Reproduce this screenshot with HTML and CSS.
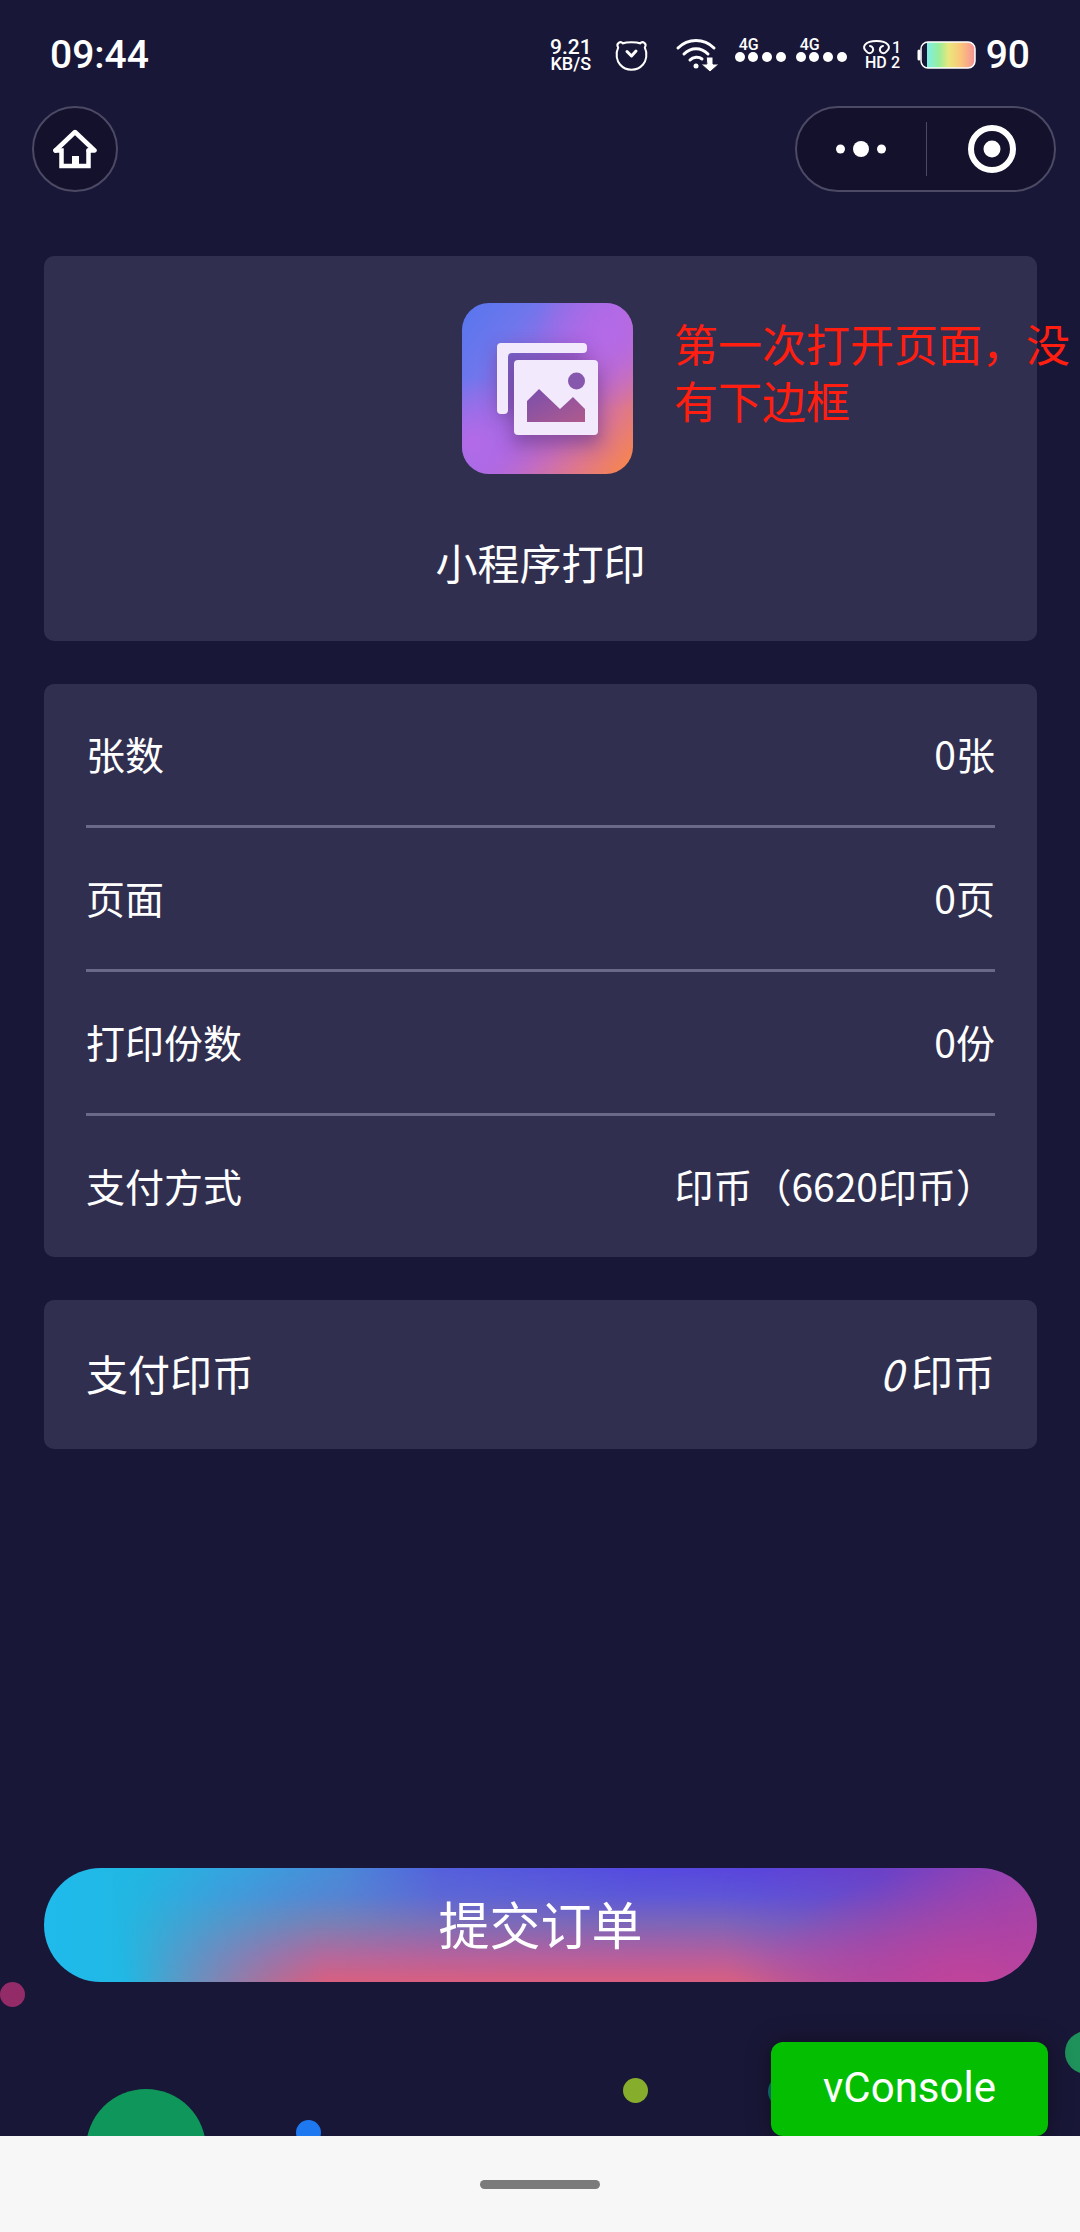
FILE: index.html
```html
<!DOCTYPE html>
<html lang="zh-CN">
<head>
<meta charset="utf-8">
<meta name="viewport" content="width=device-width, initial-scale=1">
<title>小程序打印</title>
<link rel="stylesheet" href="styles.css">
</head>
<body>
<div class="screen">
  <div class="bubbles" aria-hidden="true">
    <span class="bubble bubble-pink"></span>
    <span class="bubble bubble-green"></span>
    <span class="bubble bubble-blue"></span>
    <span class="bubble bubble-lime"></span>
    <span class="bubble bubble-teal"></span>
    <span class="bubble bubble-edge"></span>
  </div>

  <header class="status">
    <time class="clock">09:44</time>
    <div class="indicators">
      <div class="speed"><span class="speed-value">9.21</span><span class="speed-unit">KB/S</span></div>
      <svg class="alarm" viewBox="0 0 59 32" fill="none" stroke="#fff" stroke-width="2" stroke-linecap="round" stroke-linejoin="round">
        <path d="M21 4.5C24 2.800 35 2.800 38 4.500C40.500 1.500 45.500 4.500 42.800 8.500C46 15 44 22 41 25.500C35 32.500 24 32.500 18 25.500C15 22 13 15 16.200 8.500C13.500 4.500 18.500 1.500 21 4.500Z"/>
        <path d="M25 12.500l4.500 4.500 4.500-5" stroke-width="3"/>
      </svg>
      <svg class="wifi" viewBox="0 0 54 36" fill="none" stroke="#fff" stroke-width="3" stroke-linecap="round">
        <path d="M7 11C17 1 33 1 43 11"/><path d="M13 17C20 10 30 10 37 17"/><path d="M19 23C22 19.500 28 19.500 31 22"/>
        <circle cx="25" cy="29" r="2.500" fill="#fff" stroke="none"/>
        <path d="M35.500 20h6.500v7h6L39 35l-9-8h5.500z" fill="#fff" stroke="#191737" stroke-width="1"/>
      </svg>
      <div class="signal"><span class="signal-type">4G</span><span class="signal-dots"><i></i><i></i><i></i><i></i></span></div>
      <div class="signal"><span class="signal-type">4G</span><span class="signal-dots"><i></i><i></i><i></i><i></i></span></div>
      <svg class="hd" viewBox="0 0 50 40">
        <path d="M13 11A3.600 3.600 0 1 1 9.500 16.500C4 12 8 6 19.500 6S35 12 29.500 16.500A3.600 3.600 0 1 1 26 11" fill="none" stroke="#fff" stroke-width="2" stroke-linecap="round"/>
        <text x="8" y="33" font-size="16">HD</text>
        <text x="35" y="18" font-size="16">1</text>
        <text x="34" y="33" font-size="16">2</text>
      </svg>
      <svg class="battery" viewBox="0 0 59 28">
        <defs><linearGradient id="charge"><stop offset="0" stop-color="#7defe6"/><stop offset=".25" stop-color="#98ee9a"/><stop offset=".45" stop-color="#eae77c"/><stop offset=".7" stop-color="#fbc57b"/><stop offset="1" stop-color="#f79096"/></linearGradient></defs>
        <path d="M2 10v8" stroke="#fff" stroke-width="3" stroke-linecap="round"/>
        <path d="M10 1h41q7 0 7 7v12q0 7-7 7H10z" fill="url(#charge)"/>
        <rect x="4" y="1" width="54" height="26" rx="7" fill="none" stroke="#fff" stroke-width="1.500"/>
      </svg>
      <span class="level">90</span>
    </div>
  </header>

  <nav class="navbar">
    <button class="home" type="button" aria-label="首页">
      <svg viewBox="0 0 44 40" fill="none" stroke="#fff" stroke-linejoin="round" stroke-linecap="round"><path d="M2.500 21.500L22 3l19.500 18.500h-6" stroke-width="4.500"/><path d="M2.500 21.500H8.500V37h27V21.500" stroke-width="4.500" stroke-linejoin="miter"/><path d="M19 27h7v10h-7z" fill="#fff" stroke="none"/></svg>
    </button>
    <div class="capsule">
      <button class="capsule-button" type="button" aria-label="更多"><svg class="more" viewBox="0 0 50 16" fill="#fff"><circle cx="4.500" cy="8" r="4.500"/><circle cx="25" cy="8" r="8"/><circle cx="45.500" cy="8" r="4.500"/></svg></button>
      <button class="capsule-button capsule-close" type="button" aria-label="关闭"><svg class="target" viewBox="0 0 48 48"><circle cx="24" cy="24" r="21" fill="none" stroke="#fff" stroke-width="6"/><circle cx="24" cy="24" r="8.500" fill="#fff"/></svg></button>
    </div>
  </nav>

  <main class="content">
    <section class="card app">
      <svg class="app-icon" viewBox="0 0 171 171">
        <defs>
          <linearGradient id="tile" x1="0" y1=".1" x2="1" y2=".9"><stop offset="0" stop-color="#5b76ee"/><stop offset=".2" stop-color="#6f76ec"/><stop offset=".5" stop-color="#a868e2"/><stop offset=".68" stop-color="#c46cc0"/><stop offset=".82" stop-color="#dc7690"/><stop offset="1" stop-color="#f58452"/></linearGradient>
          <radialGradient id="tint"><stop offset="0" stop-color="#b46ae8"/><stop offset="1" stop-color="#b46ae8" stop-opacity="0"/></radialGradient>
          <linearGradient id="hill" x1="0" y1="0" x2="1" y2="1"><stop offset="0" stop-color="#7a4fae"/><stop offset="1" stop-color="#b05a8c"/></linearGradient>
          <filter id="soft" x="-30%" y="-30%" width="160%" height="160%"><feGaussianBlur stdDeviation="9"/></filter>
          <clipPath id="tile-shape"><rect width="171" height="171" rx="27"/></clipPath>
        </defs>
        <g clip-path="url(#tile-shape)">
          <rect width="171" height="171" fill="url(#tile)"/>
          <circle cx="150" cy="30" r="76" fill="url(#tint)"/>
          <circle cx="10" cy="140" r="66" fill="url(#tint)"/>
          <g fill="#6c3c8c" opacity=".65" filter="url(#soft)"><rect x="50" y="64" width="88" height="78"/><rect x="36" y="46" width="88" height="14"/><rect x="36" y="46" width="14" height="68"/></g>
        </g>
        <path d="M39 40h82q4 0 4 4v2q0 4-4 4H50q-4 0-4 4v53q0 4-4 4h-3q-4 0-4-4V44q0-4 4-4z" fill="#f2eafc"/>
        <rect x="52" y="57" width="84" height="75" rx="4" fill="#f2eafc"/>
        <circle cx="114.500" cy="78" r="8.500" fill="#8757ae"/>
        <path d="M65 119V98l12-12 21 20 13-12 12 12v13z" fill="url(#hill)"/>
      </svg>
      <h1 class="app-name">小程序打印</h1>
      <p class="note">第一次打开页面，没<br>有下边框</p>
    </section>

    <dl class="card details">
      <div class="row"><dt>张数</dt><dd>0张</dd></div>
      <div class="row"><dt>页面</dt><dd>0页</dd></div>
      <div class="row"><dt>打印份数</dt><dd>0份</dd></div>
      <div class="row"><dt>支付方式</dt><dd>印币（6620印币）</dd></div>
    </dl>

    <dl class="card total">
      <dt>支付印币</dt><dd><em>0</em>印币</dd>
    </dl>

    <button class="submit" type="submit">提交订单</button>
  </main>

  <button class="vconsole" type="button">vConsole</button>
</div>
<footer class="gesture"><span class="gesture-bar"></span></footer>
</body>
</html>
```
FILE: styles.css
```css
* { box-sizing: border-box; }

body {
  margin: 0;
  min-height: 100vh;
  display: flex;
  flex-direction: column;
  background: #f7f7f7;
  color: #fff;
  font-family: "Noto Sans CJK SC", sans-serif;
}

button {
  padding: 0;
  border: 0;
  color: inherit;
  font: inherit;
  cursor: pointer;
}

svg { display: block; flex: none; }
dl, dd, h1, p { margin: 0; }

.screen {
  position: relative;
  flex: 1;
  display: flex;
  flex-direction: column;
  overflow: hidden;
  background: #191737;
}

/* Decorative circles along the bottom edge */
.bubbles { position: absolute; inset: 0; }
.bubble { position: absolute; width: 25px; height: 25px; border-radius: 50%; }
.bubble-pink { left: 0; bottom: 129px; background: #942b69; }
.bubble-green { left: 86px; bottom: -73px; width: 120px; height: 120px; background: #0e965b; }
.bubble-blue { left: 296px; bottom: -9px; background: #1e78f0; }
.bubble-lime { left: 623px; bottom: 33px; background: #87ad2c; }
.bubble-teal { right: 279px; bottom: 28px; width: 33px; height: 33px; background: #13757a; }
.bubble-edge { right: -28px; bottom: 62px; width: 43px; height: 43px; background: #1f915b; }

.status {
  position: relative;
  display: flex;
  justify-content: space-between;
  align-items: center;
  height: 106px;
  padding: 3px 50px 0;
  font-family: Roboto, sans-serif;
  font-weight: 500;
}
.clock, .level { font-size: 39px; line-height: 46px; }
.indicators { display: flex; align-items: center; gap: 10px; }
.speed { display: flex; flex-direction: column; align-items: center; }
.speed-value { font-size: 21px; line-height: 18px; }
.speed-unit { font-size: 18px; line-height: 16px; }
.alarm { width: 59px; height: 32px; }
.wifi { width: 54px; height: 36px; }
.signal { display: flex; flex-direction: column; width: 51px; padding-bottom: 10px; }
.signal-type { padding-left: 4px; font-size: 16px; line-height: 14px; }
.signal-dots { display: flex; justify-content: space-between; }
.signal-dots i { width: 10px; height: 10px; border-radius: 50%; background: #fff; }
.hd { width: 50px; height: 40px; fill: #fff; }
.battery { width: 59px; height: 28px; }

.navbar {
  position: relative;
  display: flex;
  justify-content: space-between;
  padding: 0 24px 64px 32px;
}
.home, .capsule {
  align-items: center;
  height: 86px;
  border: 2px solid #4b4963;
  border-radius: 43px;
  background: #13112c;
}
.home { display: flex; justify-content: center; width: 86px; }
.home svg { width: 44px; height: 40px; }
.capsule { display: grid; grid-template-columns: 1fr 1fr; width: 261px; }
.capsule-button {
  display: flex;
  justify-content: center;
  align-items: center;
  height: 54px;
  background: none;
}
.capsule-close { padding-left: 4px; border-left: 1px solid #4b4963; }
.more { width: 50px; height: 16px; }
.target { width: 48px; height: 48px; }

.content {
  position: relative;
  flex: 1;
  display: flex;
  flex-direction: column;
  gap: 43px;
  padding: 0 43px 154px 44px;
}
.card { border-radius: 10px; background: #312f4f; }

.app {
  position: relative;
  display: flex;
  flex-direction: column;
  align-items: center;
  gap: 56px;
  padding: 47px 0;
}
.app-icon { width: 171px; height: 171px; margin-left: 14px; }
.app-name { font-size: 42px; font-weight: 400; line-height: 64px; }
.note {
  position: absolute;
  top: 59px;
  left: 630px;
  color: #ff1e10;
  font-size: 44px;
  line-height: 57px;
  white-space: nowrap;
}

.details { padding: 0 42px; font-size: 39px; line-height: 58px; }
.row {
  display: flex;
  justify-content: space-between;
  padding: 40px 0 43px;
  border-bottom: 3px solid #6b6988;
}
.row:last-child { border-bottom: 0; }

.total {
  display: flex;
  justify-content: space-between;
  padding: 41px 42px 44px;
  font-size: 42px;
  line-height: 64px;
}
.total em { margin-right: 8px; }

.submit {
  position: relative;
  isolation: isolate;
  overflow: hidden;
  height: 114px;
  margin-top: auto;
  padding-bottom: 4px;
  border-radius: 57px;
  background: linear-gradient(90deg, #1fbbec 0%, #22b7e2 10%, #38a2df 20%, #4a8ad8 30%, #5560dc 40%, #554ae0 60%, #5a45dc 72%, #6b41c8 84%, #8c42b8 93%, #a043ac 100%);
  font-size: 51px;
  line-height: 74px;
}
/* Warm glow rising from the lower edge, faded out towards the left end */
.submit::before {
  content: "";
  position: absolute;
  inset: 0;
  z-index: -1;
  background: linear-gradient(0deg, #d85f80 0%, rgba(200, 98, 144, .85) 22%, rgba(150, 120, 160, .6) 52%, rgba(110, 120, 200, .3) 76%, rgba(90, 90, 220, 0) 100%);
  -webkit-mask-image: linear-gradient(82deg, transparent 8%, #000 28%, #000 68%, transparent 96%);
  mask-image: linear-gradient(82deg, transparent 8%, #000 28%, #000 68%, transparent 96%);
}
.submit::after {
  content: "";
  position: absolute;
  inset: 0;
  z-index: -1;
  background: radial-gradient(ellipse 22% 110% at 93% 110%, #c0439a 10%, rgba(190, 68, 158, 0) 100%);
}

.vconsole {
  position: absolute;
  right: 32px;
  bottom: 0;
  width: 277px;
  height: 94px;
  padding-bottom: 4px;
  border-radius: 12px;
  background: #04be02;
  box-shadow: 0 0 24px rgba(0, 0, 0, .4);
  font-family: Roboto, sans-serif;
  font-size: 42px;
}

.gesture {
  display: flex;
  justify-content: center;
  align-items: center;
  height: 96px;
}
.gesture-bar { width: 120px; height: 9px; border-radius: 5px; background: #7b7b7b; }
```
